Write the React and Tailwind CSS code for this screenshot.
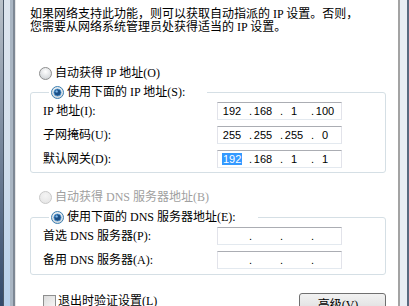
import React from "react";

const font = { fontFamily: '"Liberation Serif","Noto Sans CJK SC",serif' };

function Radio({ checked, disabled }) {
  const stroke = disabled ? "#c9c9c9" : checked ? "#3c7fb1" : "#8e8f8f";
  return (
    <svg width="13" height="13" viewBox="0 0 13 13" className="shrink-0">
      <defs>
        <radialGradient id={`rg${checked ? 1 : 0}${disabled ? 1 : 0}`} cx="50%" cy="35%" r="65%">
          <stop offset="0" stopColor={disabled ? "#f4f4f4" : "#ffffff"} />
          <stop offset="1" stopColor={disabled ? "#e6e6e6" : "#cfd3d6"} />
        </radialGradient>
      </defs>
      <circle cx="6.5" cy="6.5" r="6" fill={`url(#rg${checked ? 1 : 0}${disabled ? 1 : 0})`} stroke={stroke} />
      {checked && (
        <>
          <circle cx="6.5" cy="6.5" r="3.6" fill="#1b4f86" />
          <circle cx="6.5" cy="6.5" r="3.6" fill="none" stroke="#4f9ad8" strokeWidth="0.8" />
          <circle cx="5.6" cy="5.4" r="1.2" fill="#7fb8ea" />
        </>
      )}
    </svg>
  );
}

function IpBox({ parts, selectFirst }) {
  return (
    <div
      className="flex h-[18px] w-[125px] items-center border border-[#e2e3ea] border-t-[#abadb3] border-b-[#e3e9ef] bg-white pl-[4px] text-[11px] leading-[13px] text-black"
      style={{ fontFamily: '"Liberation Sans",Arial,sans-serif' }}
    >
      {parts.map((p, i) => (
        <React.Fragment key={i}>
          <div className="w-[20px] text-center">
            {i === 0 && selectFirst ? (
              <span className="bg-[#3399ff] px-[1px] text-white">{p}</span>
            ) : (
              p
            )}
          </div>
          {i < 3 && <div className="w-[11px] pr-[1px] text-right">.</div>}
        </React.Fragment>
      ))}
    </div>
  );
}

function Row({ label, parts, selectFirst }) {
  return (
    <div className="flex h-[18px] items-center">
      <div className="w-[174px] whitespace-nowrap">{label}</div>
      <IpBox parts={parts} selectFirst={selectFirst} />
    </div>
  );
}

function RadioRow({ checked, disabled, children }) {
  return (
    <div className={`flex h-[14px] items-center gap-[3px] whitespace-nowrap ${disabled ? "text-[#a0a0a0]" : "text-black"}`}>
      <Radio checked={checked} disabled={disabled} />
      <span>{children}</span>
    </div>
  );
}

export default function App() {
  return (
    <div className="flex h-[306px] w-[409px] overflow-hidden bg-white text-[12px] leading-[14px] text-black" style={font}>
      {/* left window frame */}
      <div className="flex h-full w-[16px] shrink-0">
        <div className="w-[3px] bg-gradient-to-b from-[#b9c1c9] to-[#33496a]" />
        <div className="w-[1px] bg-[#4a5868]" />
        <div className="w-[6px] bg-gradient-to-b from-[#dde5ee] via-[#d3dfec] to-[#b7d0eb]" />
        <div className="w-[3px] bg-[#aab6c3]" />
        <div className="w-[2px] bg-[#7d8794]" />
        <div className="w-[1px] bg-[#e6e6e6]" />
      </div>

      {/* dialog content */}
      <div className="flex w-[382px] shrink-0 flex-col">
        <div className="pl-[14px] pt-[8px] leading-[13px]">
          <div className="whitespace-nowrap">如果网络支持此功能，则可以获取自动指派的 IP 设置。否则，</div>
          <div className="whitespace-nowrap">您需要从网络系统管理员处获得适当的 IP 设置。</div>
        </div>

        <div className="ml-[23px] mt-[32px]">
          <RadioRow>自动获得 IP 地址(O)</RadioRow>
        </div>

        <fieldset className="ml-[14px] mt-[5px] w-[356px] rounded-[3px] border border-[#d5dfe5] pb-[4px] pl-[12px]">
          <legend className="ml-[6px] pl-[2px] pr-[22px]">
            <RadioRow checked>使用下面的 IP 地址(S):</RadioRow>
          </legend>
          <div className="flex flex-col gap-[6px] pt-[3px]">
            <Row label="IP 地址(I):" parts={["192", "168", "1", "100"]} />
            <Row label="子网掩码(U):" parts={["255", "255", "255", "0"]} />
            <Row label="默认网关(D):" parts={["192", "168", "1", "1"]} selectFirst />
          </div>
        </fieldset>

        <div className="ml-[23px] mt-[17px]">
          <RadioRow disabled>自动获得 DNS 服务器地址(B)</RadioRow>
        </div>

        <fieldset className="ml-[14px] mt-[6px] w-[356px] rounded-[3px] border border-[#d5dfe5] pb-[5px] pl-[12px]">
          <legend className="ml-[6px] pl-[2px] pr-[22px]">
            <RadioRow checked>使用下面的 DNS 服务器地址(E):</RadioRow>
          </legend>
          <div className="flex flex-col gap-[6px] pt-[3px]">
            <Row label="首选 DNS 服务器(P):" parts={["", "", "", ""]} />
            <Row label="备用 DNS 服务器(A):" parts={["", "", "", ""]} />
          </div>
        </fieldset>

        <div className="mt-[18px] flex items-start justify-between">
          <div className="ml-[27px] mt-[1px] flex items-center gap-[2px] whitespace-nowrap">
            <div className="h-[13px] w-[13px] border border-[#8e8f8f] bg-gradient-to-br from-[#dcdcdc] to-[#f6f6f6]" />
            <span>退出时验证设置(L)</span>
          </div>
          <div className="mr-[12px] flex h-[23px] w-[87px] items-center justify-center rounded-[3px] border border-[#707070] bg-gradient-to-b from-[#f2f2f2] via-[#e6e6e6] to-[#cfcfcf] whitespace-nowrap">
            高级(V)...
          </div>
        </div>
      </div>

      {/* right window frame */}
      <div className="flex h-full w-[11px] shrink-0">
        <div className="w-[2px] bg-[#a3a3a3]" />
        <div className="w-[7px] bg-[#e9eef4]" />
        <div className="w-[2px] bg-[#596a80]" />
      </div>
    </div>
  );
}
